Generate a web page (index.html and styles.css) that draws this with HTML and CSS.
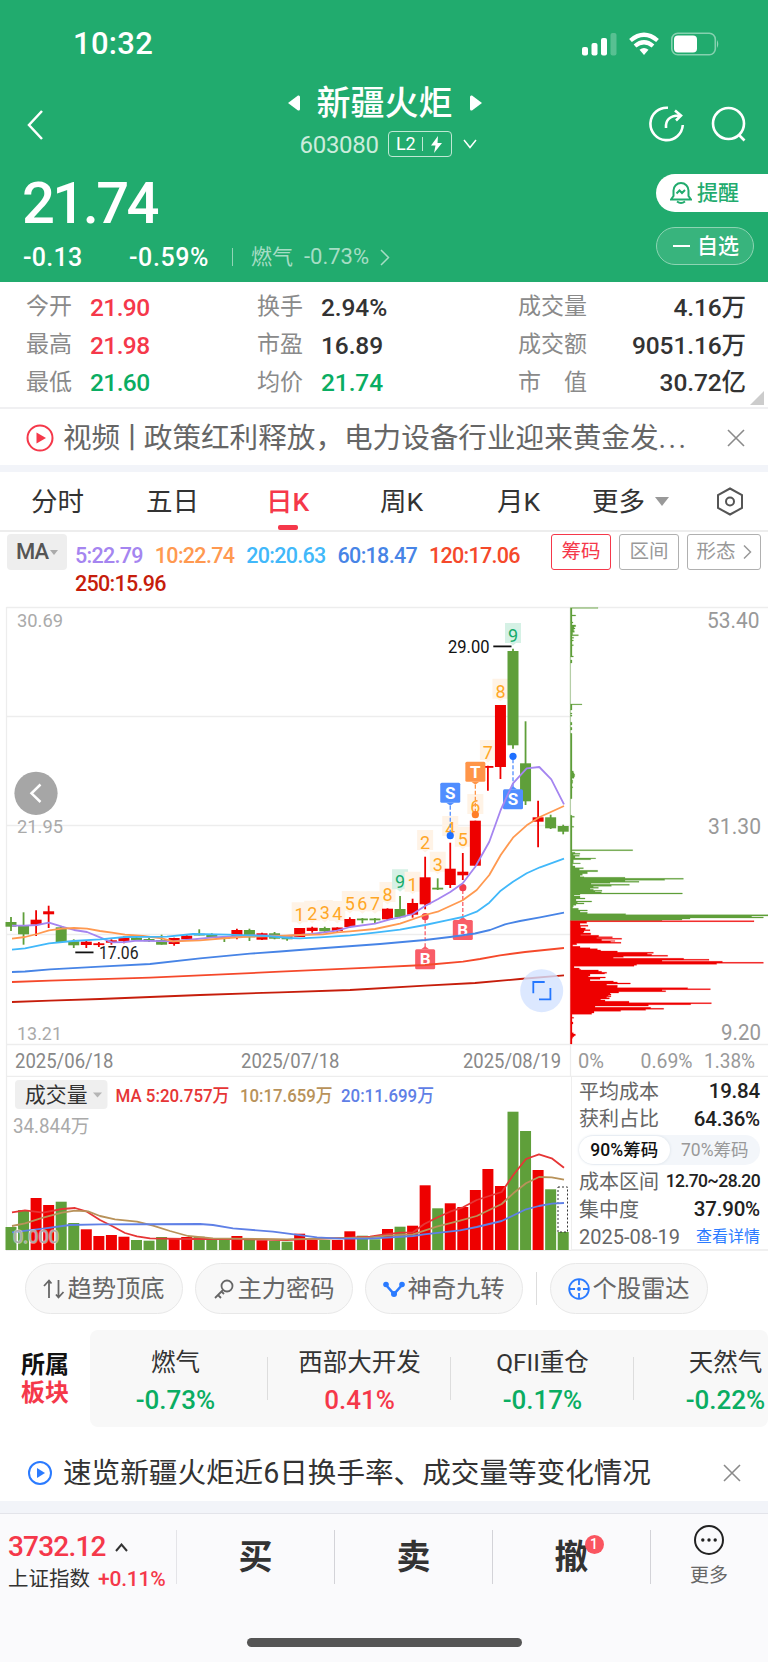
FILE: index.html
```html
<!DOCTYPE html>
<html lang="zh-CN">
<head>
<meta charset="UTF-8">
<title>新疆火炬 603080</title>
<link rel="stylesheet" href="styles.css">
</head>
<body>
<header class="header">
  <div class="status">
    <span class="time">10:32</span>
    <svg width="138" height="24" viewBox="0 0 138 24" fill="#fff">
      <rect x="1" y="15" width="6" height="8.5" rx="2"/>
      <rect x="10.500" y="11" width="6" height="12.500" rx="2"/>
      <rect x="20" y="6" width="6" height="17.500" rx="2"/>
      <rect x="29.500" y="1" width="6" height="22.500" rx="2" opacity=".25"/>
      <g fill="none" stroke="#fff" stroke-width="4.200">
        <path d="M49.500 8.500 Q63 -3 76.500 8.500"/>
        <path d="M54 14 Q63 6.500 72 14"/>
      </g>
      <path d="M58.500 17.800 Q63 14 67.500 17.800 L63 23 Z"/>
      <rect x="90.800" y="1.200" width="43.500" height="21.600" rx="6" fill="none" stroke="#fff" stroke-width="1.600" opacity=".45"/>
      <rect x="93" y="3.500" width="23" height="17" rx="4"/>
      <path d="M136 8 Q138.500 12 136 16 Z" opacity=".5"/>
    </svg>
  </div>
  <div class="titlebar">
    <svg class="back" width="18" height="32" viewBox="0 0 18 32"><path d="M16 2 L3 16 L16 30"/></svg>
    <div class="title">
      <div class="name">
        <svg width="12" height="16" viewBox="0 0 12 16"><path d="M0 8 L10 .5 Q12 0 12 2 V14 Q12 16 10 15.500 Z" fill="#fff"/></svg>
        <span>新疆火炬</span>
        <svg width="12" height="16" viewBox="0 0 12 16"><path d="M12 8 L2 .5 Q0 0 0 2 V14 Q0 16 2 15.500 Z" fill="#fff"/></svg>
      </div>
      <div class="code">
        <span class="num">603080</span>
        <span class="level num">L2<i></i>
          <svg width="13" height="17" viewBox="0 0 13 17"><path d="M8 0 L1 9.500 H5.500 L4 17 L12 7 H7.500 Z" fill="#fff"/></svg>
        </span>
        <svg width="14" height="10" viewBox="0 0 14 10"><path d="M1 1 L7 8.500 L13 1"/></svg>
      </div>
    </div>
    <div class="tools">
      <svg width="36" height="36" viewBox="0 0 36 36"><path d="M19 1.800 A16.200 16.200 0 1 0 33.800 19"/><path d="M17 22 Q16 10 30 9.500 M26 4.500 L32 9.500 L27 14.500"/></svg>
      <svg width="36" height="36" viewBox="0 0 36 36"><circle cx="17.500" cy="17.500" r="15.500"/><path d="M27.500 28.500 L33.500 34.500"/></svg>
    </div>
  </div>
  <div class="quote">
    <div>
      <div class="price num">21.74</div>
      <div class="change num">
        <span class="diff">-0.13</span><span class="rate">-0.59%</span><i></i>
        <span class="sector-link">燃气</span><span class="sector-rate">-0.73%</span>
        <svg width="10" height="17" viewBox="0 0 10 17"><path d="M1 1 L8.500 8.500 L1 16"/></svg>
      </div>
    </div>
    <div class="actions">
      <div class="remind">
        <svg width="22" height="24" viewBox="0 0 22 24"><path d="M1 18.500 H21 L18.500 15 V9.500 A7.500 7.500 0 0 0 3.500 9.500 V15 Z M7 20.500 Q11 23.500 15 20.500 M6.500 12.500 L9.500 9.500 L12 12 L15 9"/></svg>
        提醒
      </div>
      <div class="fav"><i></i>自选</div>
    </div>
  </div>
</header>

<section class="stats">
  <dl class="col1">
    <dt>今开</dt><dd class="up">21.90</dd>
    <dt>最高</dt><dd class="up">21.98</dd>
    <dt>最低</dt><dd class="down">21.60</dd>
  </dl>
  <dl class="col2">
    <dt>换手</dt><dd>2.94%</dd>
    <dt>市盈</dt><dd>16.89</dd>
    <dt>均价</dt><dd class="down">21.74</dd>
  </dl>
  <dl class="col3">
    <dt>成交量</dt><dd>4.16万</dd>
    <dt>成交额</dt><dd>9051.16万</dd>
    <dt>市　值</dt><dd>30.72亿</dd>
  </dl>
  <i class="corner"></i>
</section>

<div class="notice video">
  <svg width="28" height="28" viewBox="0 0 28 28"><circle cx="14" cy="14" r="12.500" fill="none" stroke="#f5384a" stroke-width="2"/><path d="M10.500 8.500 L20 14 L10.500 19.500 Z" fill="#f5384a"/></svg>
  <span class="msg">视频<b>丨</b>政策红利释放，电力设备行业迎来黄金发<em>...</em></span>
  <svg class="close" width="18" height="18" viewBox="0 0 18 18"><path d="M1 1 L17 17 M17 1 L1 17"/></svg>
</div>
<div class="band"></div>

<nav class="tabs">
  <span class="t1">分时</span><span class="t2">五日</span><span class="t3 active">日K</span>
  <span class="t4">周K</span><span class="t5">月K</span><span class="t6">更多<i></i></span>
  <svg width="28" height="29" viewBox="0 0 28 29"><path d="M14 1.500 L26 8 V21 L14 27.500 L2 21 V8 Z"/><circle cx="14" cy="14.500" r="4"/></svg>
</nav>

<div class="indicator">
  <span class="picker num">MA<i></i></span>
  <div class="legend num">
    <span class="ma5">5:22.79</span><span class="ma10">10:22.74</span><span class="ma20">20:20.63</span><span class="ma60">60:18.47</span><span class="ma120">120:17.06</span><span class="ma250">250:15.96</span>
  </div>
  <div class="modes">
    <span class="on">筹码</span><span>区间</span><span class="wide">形态<svg width="9" height="16" viewBox="0 0 9 16"><path d="M1 1.500 L7.500 8 L1 14.500"/></svg></span>
  </div>
</div>

<svg id="kline" width="768" height="477" viewBox="0 600 768 477"></svg>

<div class="lower">
  <svg id="volume" width="571" height="174" viewBox="0 1077 571 174"></svg>
  <div class="chips">
    <p><span>平均成本</span><b>19.84</b></p>
    <p><span>获利占比</span><b>64.36%</b></p>
    <div class="toggle"><span class="on">90%筹码</span><span>70%筹码</span></div>
    <p><span>成本区间</span><b class="small">12.70~28.20</b></p>
    <p><span>集中度</span><b>37.90%</b></p>
    <p><span class="date">2025-08-19</span><a>查看详情</a></p>
  </div>
</div>

<div class="pills">
  <span class="pill"><svg width="22" height="22" viewBox="0 0 22 22" stroke="#666"><path d="M6 20 V3 M1 8 L6 2.500 L8.500 5.500 M15.500 2 V19 M20.500 14 L15.500 19.500 L13 16.500"/></svg>趋势顶底</span>
  <span class="pill"><svg width="22" height="22" viewBox="0 0 22 22" stroke="#666"><circle cx="14" cy="8" r="5.500"/><path d="M10 12 L2 20 M5 17 L8 20 M8.500 13.500 L11 16"/></svg>主力密码</span>
  <span class="pill"><svg width="22" height="22" viewBox="0 0 22 22" stroke="#2b7bff"><path d="M3 7 L11 16 L19 7" stroke-width="2.500"/><g fill="#2b7bff" stroke="none"><circle cx="3" cy="6.500" r="2.800"/><circle cx="19" cy="6.500" r="2.800"/><circle cx="11" cy="16" r="3"/></g></svg>神奇九转</span>
  <i></i>
  <span class="pill"><svg width="22" height="22" viewBox="0 0 22 22" stroke="#2b7bff"><circle cx="11" cy="11" r="9.800"/><path d="M11 1 V7 M11 15 V21 M1 11 H7 M15 11 H21"/><circle cx="11" cy="11" r="1" fill="#2b7bff"/></svg>个股雷达</span>
</div>

<div class="sectors">
  <div class="label">所属<br><em>板块</em></div>
  <div class="cells">
    <div><span>燃气</span><b class="down">-0.73%</b></div>
    <div><span>西部大开发</span><b class="up">0.41%</b></div>
    <div><span>QFII重仓</span><b class="down">-0.17%</b></div>
    <div><span>天然气</span><b class="down">-0.22%</b></div>
  </div>
</div>

<div class="notice tip">
  <svg width="26" height="26" viewBox="0 0 26 26"><circle cx="13" cy="13" r="11" fill="none" stroke="#2b7bff" stroke-width="2"/><path d="M10 8 L18 13 L10 18 Z" fill="#2b7bff"/></svg>
  <span class="msg">速览新疆火炬近6日换手率、成交量等变化情况</span>
  <svg class="close" width="18" height="18" viewBox="0 0 18 18"><path d="M1 1 L17 17 M17 1 L1 17"/></svg>
</div>

<footer class="footer">
  <div class="bar">
    <div class="index">
      <div class="point num">3732.12<svg width="13" height="9" viewBox="0 0 13 9"><path d="M1 8 L6.500 1.500 L12 8"/></svg></div>
      <div class="sub">上证指数<span class="num">+0.11%</span></div>
    </div>
    <div class="trade">买</div>
    <div class="trade">卖</div>
    <div class="trade"><span>撤<sup>1</sup></span></div>
    <div class="more">
      <svg width="32" height="32" viewBox="0 0 32 32"><circle cx="16" cy="16" r="14" fill="none" stroke="#222" stroke-width="2"/><g fill="#222"><circle cx="9.800" cy="16" r="1.700"/><circle cx="16" cy="16" r="1.700"/><circle cx="22.200" cy="16" r="1.700"/></g></svg>
      更多
    </div>
  </div>
  <div class="home"></div>
</footer>
<script src="chart.js"></script>
</body>
</html>
```
FILE: styles.css
```css
* {
  box-sizing: border-box;
}
body {
  margin: 0;
  width: 768px;
  background: #fff;
  color: #333;
  font-family: Roboto, "Noto Sans CJK SC", sans-serif;
  line-height: 1;
}
svg {
  display: block;
  flex: none;
}
i, em {
  font-style: normal;
}
.up { color: #f5384a; }
.down { color: #0aad62; }

/* header */
.header {
  height: 282px;
  background: #21ab6e;
  color: #fff;
  overflow: hidden;
}
.header path, .tools circle {
  stroke: #fff;
}
.status path, .name path, .level path {
  stroke: none;
}
.status g path {
  stroke: #fff;
}
.status {
  height: 87px;
  padding: 0 49px 0 73px;
  display: flex;
  align-items: center;
  justify-content: space-between;
}
.time {
  font-size: 31px;
  font-weight: 500;
  letter-spacing: .3px;
}
.titlebar {
  height: 76px;
  display: flex;
  justify-content: space-between;
  padding: 0 21px 0 26px;
}
.back {
  margin-top: 22px;
  width: 18px;
  fill: none;
  stroke-width: 2.5;
}
.title {
  width: 200px;
  margin-left: 76px;
}
.name {
  height: 32px;
  display: flex;
  align-items: center;
  justify-content: center;
  gap: 17px;
  font-size: 34px;
  font-weight: 500;
}
.code {
  margin-top: 12px;
  height: 26px;
  padding-left: 15px;
  display: flex;
  align-items: center;
  gap: 9px;
  font-size: 24px;
  color: #cbecdc;
  letter-spacing: -.3px;
}
.code > .num:first-child {
  padding-top: 2px;
}
.code > svg {
  fill: none;
  stroke-width: 1.5;
  margin-left: 2px;
}
.level {
  height: 26px;
  width: 64px;
  border: 1.5px solid #bfe8d4;
  border-radius: 4px;
  display: flex;
  align-items: center;
  justify-content: center;
  gap: 7px;
  font-size: 18px;
  color: #fff;
}
.level i {
  width: 1px;
  height: 14px;
  background: #bfe8d4;
}
.tools {
  display: flex;
  gap: 26px;
  padding-top: 19px;
  fill: none;
  stroke-width: 2.6;
}
.quote {
  display: flex;
  justify-content: space-between;
}
.price {
  margin: 11px 0 0 22px;
  height: 58px;
  font-size: 58px;
  font-weight: 500;
  letter-spacing: -2.6px;
}
.change {
  height: 50px;
  padding-left: 23px;
  display: flex;
  align-items: center;
  font-size: 25px;
  font-weight: 500;
}
.diff { width: 106px; letter-spacing: .3px; }
.rate { width: 103px; letter-spacing: .6px; }
.change i {
  width: 1px;
  height: 18px;
  background: #90d5b6;
  margin-right: 18px;
}
.sector-link, .sector-rate {
  font-size: 21px;
  font-weight: 400;
  color: #a6ddc5;
  margin-right: 11px;
}
.sector-rate {
  font-size: 22px;
  letter-spacing: 0;
}
.change svg {
  fill: none;
  stroke-width: 1.5;
  opacity: .6;
}
.actions {
  width: 112px;
  padding-top: 11px;
  font-size: 21px;
  font-weight: 500;
}
.remind, .fav {
  height: 38px;
  display: flex;
  align-items: center;
  border-radius: 19px 0 0 19px;
  padding-left: 14px;
  gap: 5px;
  background: #fff;
  color: #21ab6e;
}
.remind path {
  fill: none;
  stroke: #21ab6e;
  stroke-width: 2;
}
.fav {
  margin-top: 15px;
  width: 98px;
  gap: 7px;
  padding-left: 16px;
  color: #fff;
  background: #38b47d;
  border: 1px solid #8dd4b3;
  border-radius: 19px;
}
.fav i {
  width: 17px;
  height: 2px;
  background: #fff;
}

/* quote figures */
.stats {
  position: relative;
  height: 127px;
  padding: 6px 22px 0 26px;
  display: flex;
  border-bottom: 2px solid #f0f0f2;
}
.stats dl {
  margin: 0;
  display: grid;
  grid-template-columns: 64px auto;
  grid-auto-rows: 37.700px;
  align-items: center;
  justify-content: start;
}
.stats .col1 {
  width: 231px;
}
.stats .col2 {
  width: 261px;
}
.stats .col3 {
  flex: 1;
  grid-template-columns: 70px 1fr;
}
.stats dt {
  font-size: 23px;
  color: #8a8a8a;
}
.stats dd {
  margin: 3px 0 0;
  font-size: 24.500px;
  font-weight: 500;
  letter-spacing: -.1px;
}
.stats .col1 dd {
  letter-spacing: -.6px;
}
.col3 dd {
  text-align: right;
}
.corner {
  position: absolute;
  right: 4px;
  bottom: 2px;
  border-left: 14px solid transparent;
  border-bottom: 14px solid #ccc;
}

.notice {
  height: 56px;
  padding: 2px 23px 0 26px;
  display: flex;
  align-items: center;
  font-size: 28.600px;
  white-space: nowrap;
}
.notice .msg {
  flex: 1;
  margin-left: 9px;
}
.notice b {
  font-weight: 400;
  margin: 0 -2.500px;
}
.notice em {
  letter-spacing: 2.500px;
}
.close {
  stroke: #8a8a8a;
  stroke-width: 1.6;
}
.video { color: #666; }
.tip {
  margin-top: 16px;
  padding: 2px 27px 0;
  height: 58px;
}
.tip .msg { margin-left: 10px; }
.band {
  height: 7px;
  background: #f2f4f9;
}

.tabs {
  height: 60px;
  border-bottom: 2px solid #ededed;
  display: flex;
  align-items: center;
  font-size: 26.500px;
  padding-left: 31px;
}
.tabs span {
  height: 58px;
  line-height: 60px;
}
.t1 { width: 115px; }
.t2 { width: 120px; }
.t3 { width: 114px; }
.t4 { width: 117px; }
.t5 { width: 95px; }
.t6 {
  width: 124px;
}
.t6 i {
  display: inline-block;
  margin-left: 10px;
  vertical-align: 5px;
  border: 7px solid transparent;
  border-top: 9px solid #999;
  border-bottom: 0;
}
.tabs svg {
  fill: none;
  stroke: #555;
  stroke-width: 2;
}
.active {
  color: #f5384a;
  font-weight: 500;
}
.active::after {
  content: "";
  display: block;
  width: 20px;
  height: 5px;
  margin: -7px 0 0 12px;
  border-radius: 2px;
  background: #f5384a;
}

.indicator {
  height: 68px;
  padding: 2px 7px 0;
  display: flex;
}
.picker {
  flex: none;
  width: 60px;
  height: 36px;
  border-radius: 4px;
  background: #eee;
  display: flex;
  align-items: center;
  justify-content: center;
  font-size: 22px;
  color: #555;
  font-weight: 500;
  letter-spacing: -1px;
}
.picker i {
  margin-left: 2px;
  border: 4.500px solid transparent;
  border-top: 5.500px solid #aaa;
  border-bottom: 0;
}
.legend {
  flex: none;
  width: 484px;
  padding: 8px 0 0 8px;
  display: flex;
  flex-wrap: wrap;
  align-content: flex-start;
  column-gap: 12px;
  font-size: 21.500px;
  font-weight: 500;
  line-height: 28px;
  letter-spacing: -.7px;
}
.ma5 { color: #a585f0; }
.ma10 { color: #ff9950; }
.ma20 { color: #41b8fa; }
.ma60 { color: #4784e6; }
.ma120 { color: #f5492b; }
.ma250 { color: #c61d0b; }
.modes {
  flex: none;
  display: flex;
  gap: 8px;
  font-size: 19.500px;
  color: #999;
}
.modes span {
  width: 60px;
  height: 36px;
  border: 1px solid #b0b0b0;
  border-radius: 3px;
  display: flex;
  align-items: center;
  justify-content: center;
  gap: 7px;
}
.modes .wide { width: 74px; }
.modes .on {
  color: #f5384a;
  border-color: #f5384a;
}
.modes svg {
  fill: none;
  stroke: #999;
  stroke-width: 1.5;
}

/* charts */
#kline, #volume {
  font-family: Roboto, "Noto Sans CJK SC", sans-serif;
}
.lower {
  display: flex;
  height: 174px;
}
.chips {
  width: 197px;
  border-left: 1px solid #eee;
  border-bottom: 2px solid #f0f0f0;
  padding: 1px 8px 0 7px;
}
.chips p {
  margin: 0;
  height: 27.300px;
  display: flex;
  align-items: center;
  justify-content: space-between;
  font-size: 20px;
  color: #666;
}
.chips b {
  font-weight: 500;
  font-size: 20.500px;
  letter-spacing: -.2px;
  color: #222;
}
.chips .small {
  font-size: 17.500px;
  letter-spacing: -.6px;
}
.chips .date {
  font-size: 20px;
}
.chips a {
  font-size: 16px;
  color: #2b7bff;
}
.toggle {
  height: 30px;
  margin: 2px 0 4px;
  border-radius: 15px;
  background: #f3f6fa;
  display: flex;
  align-items: center;
  font-size: 17.500px;
  color: #999;
}
.toggle span {
  flex: 1;
  height: 28px;
  line-height: 28px;
  text-align: center;
  letter-spacing: 0;
}
.toggle .on {
  border-radius: 14px;
  background: #fff;
  box-shadow: 0 0 3px #d5dde5;
  color: #111;
  font-weight: 500;
}

.pills {
  display: flex;
  align-items: center;
  gap: 12px;
  padding: 12px 0 0 25px;
}
.pill {
  width: 158px;
  height: 51px;
  padding-top: 1px;
  border: 1px solid #e8e8e8;
  border-radius: 26px;
  background: #f8f8f8;
  display: flex;
  align-items: center;
  justify-content: center;
  gap: 2px;
  font-size: 24.300px;
  color: #666;
}
.pill svg {
  fill: none;
  stroke-width: 1.8;
}
.pills i {
  width: 1px;
  height: 33px;
  margin: 0 1px;
  background: #ddd;
}

.sectors {
  margin-top: 16px;
  height: 97px;
  display: flex;
  align-items: center;
  overflow: hidden;
}
.label {
  width: 90px;
  flex: none;
  padding-left: 21px;
  font-size: 24px;
  font-weight: 700;
  line-height: 28px;
  color: #111;
}
.label em { color: #f5384a; }
.cells {
  flex: none;
  width: 678px;
  height: 97px;
  border-radius: 8px;
  background: #f8f8f8;
  display: flex;
  overflow: hidden;
}
.cells div {
  flex: none;
  width: 183px;
  padding-top: 21px;
  text-align: center;
  font-size: 24.500px;
  white-space: nowrap;
  background: linear-gradient(#ddd, #ddd) right 27px / 1px 43px no-repeat;
}
.cells div:first-child {
  width: 178px;
  padding-right: 7px;
}
.cells span, .cells b {
  display: block;
}
.cells b {
  margin-top: 11px;
  font-size: 26px;
  font-weight: 500;
}

.footer {
  height: 161px;
  background: #fafafc;
  border-top: 12px solid #f2f4f9;
}
.bar {
  height: 125px;
  border-top: 1px solid #e3e4ea;
  padding-top: 16px;
  display: flex;
}
.index {
  width: 177px;
  padding: 3px 0 0 8px;
  background: linear-gradient(#e4e4e8, #e4e4e8) right 0 / 1px 54px no-repeat;
}
.point {
  display: flex;
  align-items: center;
  gap: 9px;
  font-size: 28px;
  font-weight: 500;
  letter-spacing: -.8px;
  color: #f5384a;
}
.point svg {
  fill: none;
  stroke: #333;
  stroke-width: 2;
}
.sub {
  margin-top: 8px;
  font-size: 20.500px;
  white-space: nowrap;
}
.sub .num {
  margin-left: 8px;
  font-size: 21px;
  letter-spacing: -.2px;
  font-weight: 500;
  color: #f5384a;
}
.trade {
  width: 158px;
  height: 54px;
  border-right: 1px solid #d3d3d8;
  display: flex;
  align-items: center;
  justify-content: center;
  font-size: 34px;
  font-weight: 700;
}
.trade span {
  position: relative;
}
.trade sup {
  position: absolute;
  top: -5px;
  left: 30px;
  width: 19px;
  height: 19px;
  border-radius: 50%;
  background: #fa5560;
  color: #fff;
  font-size: 14px;
  font-weight: 500;
  line-height: 19px;
  text-align: center;
}
.more {
  width: 116px;
  display: flex;
  flex-direction: column;
  align-items: center;
  gap: 10px;
  margin-top: -6px;
  font-size: 19px;
  color: #666;
}
.home {
  width: 275px;
  height: 9px;
  margin: 0 auto;
  border-radius: 5px;
  background: #555;
}
```
FILE: chart.js
```js
const RED = '#ee0000', GREEN = '#5f9f3a';
const STEP = 12.55;
const cx = i => 11 + STEP * i;

// color, high, body top, body bottom, low
const candles = [
  ['g',917,922,926.7,931],['g',912.3,925.7,934.3,944.7],['r',910.3,919.7,924.7,936],['r',905.7,911.3,914.3,928],
  ['g',926.7,927.3,942,942],['g',939.3,941.3,945.3,948],['r',940.3,941.7,945,948],['r',942,943.3,945,947],
  ['r',939.3,940.3,942.7,944.7],['r',936.3,937,941,943.3],['g',937,937.7,940.3,941],['g',937.7,939,941.3,942],
  ['g',934.7,940,944.7,944.7],['r',937.7,938,944,945.7],['r',934.7,935.7,939.3,939.3],['g',929.3,933.7,934.7,935.3],
  ['g',933.3,934,937.3,938],['g',936,937,938.7,942],['r',928.7,930,937.3,939.3],['g',928.7,930,937.3,941],
  ['r',932.7,933.3,939.7,940],['g',932,933.3,938.7,939.3],['g',935,936,939.3,940.7],['r',928,928,937,937],
  ['r',926.7,927.7,931,932.7],['g',926.7,928,931.3,932.7],['r',927.3,927.5,931,932.7],['r',917.3,919,927,927.7],
  ['g',918,918.5,920,923.3],['g',918,918.5,920,923],['r',908.3,908.7,919.3,920],['g',896,909,917.3,918.3],
  ['r',898.7,903,914.7,917.7],['r',856.7,877.3,904.3,909.3],['g',878.3,887.7,889.3,890],['r',842.7,868.7,885,888],
  ['r',853,871.7,875.3,880],['r',820.7,820.7,865.7,865.7],['r',765.7,766,767.5,790.7],['r',705,705,767,779],
  ['g',648.7,651,745.3,748.7],['g',721.3,763.3,801.3,805],['r',800.7,817.3,821.7,847.3],['g',814.7,817.3,828.3,829],
  ['g',824.7,826,831.7,834.3]
];

const averages = {
  '#c61d0b': '12,1002 50,1000.7 100,999 200,995 280,992.3 350,990 425,985.7 475,983 520,979 564,975.3',
  '#f5492b': '12,982 50,980.7 150,977.7 200,975.3 280,971.7 370,967.7 425,965 463,961.7 480,959 500,955.3 525,952 564,948',
  '#4784e6': '12,972 25,971.5 50,969.3 100,966.7 150,964 200,958.3 250,953.7 280,951.5 325,948 380,944 425,940 450,937 475,933.5 490,930 505,924.3 520,921 540,917.3 564,912.7',
  '#a585f0': '12,925.7 25,925.7 37,925 49,922.7 62,926.7 74,930 87,932 100,937.3 112,942.3 125,942 137,940.7 173,941.3 187,940 213,937.3 253,935.3 287,936 300,935 312,934 337,930.7 350,927 375,923.7 390,919.3 400,917.3 412.7,914 425,906 437.7,899.3 450.3,892 462.7,883.3 475.3,866.7 489.3,841.7 500.7,810 513,783.3 526.7,768.3 539.3,767 551.3,779.3 564,804.3',
  '#ff9950': '12,938.7 25,937 37,934 49,930.3 62,928.7 74,928 87,928.7 100,931 112,932.7 125,934.7 143,936 162,938.3 173,941.3 200,940.3 227,938 250,936.7 280,936 300,935 323,934.3 337,932.3 350,931.3 375,929 400,923.7 425,915 437.7,911.7 462.7,900.3 476.7,890 489.3,875 500.7,855 513,837.7 526.7,825.3 539.3,817.3 564,806',
  '#41b8fa': '12,949.7 25,948.3 49,943.3 73,941 100,939.3 125,937 167,936.7 193,934 227,934.7 267,936 290,938 300,938.3 320,937.3 350,935.3 375,932.7 400,929.7 425,925 446.7,920.3 462.7,917 476.7,911.7 489.3,902.7 500.7,890.7 513,881.7 526.7,873.3 540,867.3 564,858.7'
};

// candle index, digit, baseline
const counts = [
  [23,1,921.3],[24,2,919.7],[25,3,919],[26,4,920],[27,5,910],[28,6,910.3],[29,7,910.3],[30,8,901],[31,9,888.3],[32,1,890.7],
  [33,2,849],[34,3,870.7],[35,4,835],[36,5,845.7],[37,6,813],[38,7,759],[39,8,697.7],[40,9,642]
];

// candle index, letter, box top, dot y, color, dot color
const marks = [
  [35,'S',782.7,835.7,'#508eff','#1f70ff'],
  [40,'S',789.3,756.3,'#508eff','#1f70ff'],
  [37,'T',761.7,814.7,'#ff9548','#ff7f27'],
  [33,'B',949.3,916.7,'#f95d68','#f23c4c'],
  [36,'B',920,887.7,'#f95d68','#f23c4c']
];

// cost distribution: row, bar end (3 units per pixel)
const profit = [[23,114],[25,36],[45,47],[48,36],[66,39],[69,36],[75,47],[80,42],[84,45],[87,41],[92,43],[97,38],[104,55],[107,36],[112,41],[115,36],[120,40],[123,36],[134,40],[137,36],[168,40],[171,0],[180,36],[189,0],[312,66],[314,36],[330,0],[339,36],[342,0],[345,36],[349,0],[367,36],[375,0],[382,36],[390,0],[400,36],[513,40],[518,42],[522,44],[530,42],[535,36],[540,38],[550,36],[560,38],[564,36],[596,0],[646,36],[649,43],[652,36],[679,41],[682,36],[749,218],[752,36],[757,45],[760,60],[763,40],[766,58],[769,45],[772,45],[774,107],[776,92],[779,40],[789,61],[791,38],[798,45],[803,70],[806,58],[811,113],[815,82],[818,82],[821,67],[826,60],[830,72],[832,195],[835,370],[838,314],[841,195],[844,237],[847,150],[850,93],[853,208],[856,154],[859,100],[862,115],[865,90],[868,100],[871,126],[874,105],[876,124],[879,367],[882,60],[885,42],[888,60],[894,75],[897,48],[903,95],[906,52],[909,72],[912,48],[916,40],[920,38],[925,55],[930,82],[933,60],[937,82],[941,197],[944,624],[948,575],[951,610],[954,390],[957,366],[960,306],[962,0]];
const loss = [[962,582],[965,80],[967,80],[970,60],[976,84],[979,62],[984,76],[989,90],[992,72],[996,70],[999,92],[1004,62],[1006,116],[1010,157],[1013,110],[1015,185],[1018,125],[1022,165],[1024,152],[1027,183],[1030,50],[1034,38],[1039,60],[1043,90],[1046,112],[1050,122],[1053,172],[1057,280],[1060,262],[1063,275],[1066,323],[1069,190],[1072,160],[1075,371],[1078,447],[1081,306],[1084,487],[1087,610],[1090,470],[1093,230],[1096,222],[1099,42],[1104,58],[1108,62],[1110,115],[1114,125],[1117,140],[1120,134],[1122,90],[1128,85],[1131,136],[1134,120],[1138,90],[1143,160],[1146,172],[1149,211],[1152,140],[1156,172],[1163,383],[1166,451],[1169,306],[1172,317],[1175,176],[1179,150],[1182,153],[1185,145],[1187,153],[1190,140],[1193,148],[1197,122],[1200,135],[1204,207],[1208,454],[1211,392],[1214,265],[1218,105],[1222,272],[1225,311],[1228,257],[1231,182],[1234,102],[1239,95],[1243,36],[1252,41],[1255,36],[1266,39],[1272,36],[1298,40],[1302,46],[1307,42],[1310,38],[1315,36],[1332,0]];

function text(x, y, s, width, size, fill, extra = '') {
  return `<text x="${x}" y="${y}" textLength="${width}" lengthAdjust="spacingAndGlyphs" font-size="${size}" fill="${fill}" ${extra}>${s}</text>`;
}
function line(x1, y1, x2, y2, color = '#ededed', w = 1.3, extra = '') {
  return `<path d="M${x1} ${y1} L${x2} ${y2}" stroke="${color}" stroke-width="${w}" fill="none" ${extra}/>`;
}
function poly(points, color) {
  return `<polyline points="${points}" fill="none" stroke="${color}" stroke-width="1.8" stroke-linejoin="round"/>`;
}
// one stepped outline, so that neighbouring rows leave no seams
function rows(data, color) {
  let d = `M31 ${data[0][0]}`;
  for (let i = 0; i < data.length - 1; i++) {
    d += ` H${data[i][1] || 31} V${data[i + 1][0]}`;
  }
  return `<path d="${d} H31 Z" fill="${color}" stroke="${color}" stroke-width=".8" transform="translate(560 600) scale(.33333)"/>`;
}

function drawKline() {
  let s = '';
  s += line(6.5, 607.5, 768, 607.5) + line(6.5, 716.5, 570, 716.5) + line(6.5, 825.5, 570, 825.5);
  s += line(6.5, 934.5, 570, 934.5) + line(6.5, 1044.5, 768, 1044.5) + line(6.5, 1076.300, 768, 1076.300);
  s += line(6.5, 607, 6.5, 1077) + line(570.5, 607, 570.5, 1077);
  s += text(17, 627, '30.69', 46, 19, '#aaa') + text(17, 833, '21.95', 46, 19, '#aaa') + text(17, 1039.5, '13.21', 45, 19, '#aaa');

  for (const [i, n, y] of counts) {
    const x = cx(i), nine = n === 9;
    s += `<path d="M${x - 8} ${y - 19} h16 v20 h-5 l-3 2.500 l-3 -2.500 h-5 z" fill="${nine ? '#d5f1e5' : '#fff3e6'}"/>`;
    s += `<text x="${x}" y="${y}" font-size="18" text-anchor="middle" fill="${nine ? '#16ab6a' : '#ffa726'}">${n}</text>`;
  }
  candles.forEach(([c, hi, top, bot, lo], i) => {
    const color = c === 'r' ? RED : GREEN;
    s += line(cx(i), hi, cx(i), lo, color, 1.8);
    s += `<rect x="${cx(i) - 5.5}" y="${top}" width="11" height="${Math.max(bot - top, 1.8)}" fill="${color}"/>`;
  });
  for (const [i, letter, top, dot, color, dotColor] of marks) {
    const x = cx(i), above = top < dot;
    s += line(x, above ? top + 23 : top - 2, x, dot, color, 1.3, 'stroke-dasharray="4 2"');
    s += `<rect x="${x - 10}" y="${top}" width="20" height="20" rx="1.500" fill="${color}"/>`;
    s += above
      ? `<path d="M${x - 4} ${top + 20} h8 l-4 3 z" fill="${color}"/>`
      : `<path d="M${x - 4} ${top} h8 l-4 -3 z" fill="${color}"/>`;
    s += `<text x="${x}" y="${top + 16}" font-size="17" font-weight="700" text-anchor="middle" fill="#fff">${letter}</text>`;
    s += `<circle cx="${x}" cy="${dot}" r="3.600" fill="${dotColor}"/>`;
  }
  for (const color in averages) s += poly(averages[color], color);

  s += text(448, 653.3, '29.00', 41.5, 18.5, '#111') + line(493.3, 646.4, 511.5, 646.4, '#111', 1.8);
  s += text(99, 959.3, '17.06', 39.5, 18.5, '#222') + line(75.3, 952.4, 93.5, 952.4, '#111', 1.8);

  // previous / fullscreen buttons
  s += '<circle cx="36" cy="793.300" r="21.600" fill="#a6a6a6"/><path d="M40.500 784.500 L31.500 793.300 L40.500 802" fill="none" stroke="#fff" stroke-width="2.500"/>';
  s += '<circle cx="541.700" cy="990.700" r="21.500" fill="#d3e2ff" opacity=".8"/><path d="M544.700 982 H533.300 V993.300 M550.400 988 V999.300 H539" fill="none" stroke="#2577ff" stroke-width="1.800"/>';

  s += rows(profit, GREEN) + rows(loss, RED);
  s += text(707, 628, '53.40', 52.500, 21.500, '#999') + text(708, 834, '31.30', 53, 21.500, '#999') + text(721, 1040, '9.20', 40, 21.500, '#999');
  s += text(15, 1068, '2025/06/18', 98.500, 20, '#888') + text(241, 1068, '2025/07/18', 98.500, 20, '#888') + text(463, 1068, '2025/08/19', 98, 20, '#888');
  s += text(578, 1068, '0%', 26, 19.500, '#999') + text(640.5, 1068, '0.69%', 52, 19.500, '#999') + text(704, 1068, '1.38%', 51, 19.500, '#999');
  document.getElementById('kline').innerHTML = s;
}

// color, bar top
const volumes = [
  ['g',1227],['g',1210],['r',1198],['r',1205],['g',1201.7],['g',1223],['r',1229.3],['r',1236],['r',1235],['r',1236.7],
  ['g',1240],['g',1240.7],['g',1237],['r',1238.3],['r',1237],['g',1236.7],['g',1240],['g',1239.3],['r',1236],['g',1239],
  ['r',1240.3],['g',1240.7],['g',1241.7],['r',1233.7],['r',1240],['g',1240],['r',1240],['r',1231.3],['g',1235.7],['g',1239.3],
  ['r',1229],['g',1226.7],['r',1225.7],['r',1185.3],['g',1208.3],['r',1203.3],['r',1207],['r',1190],['r',1169],['r',1186],
  ['g',1111.7],['g',1131],['r',1170],['g',1189.3],['g',1232]
];
const volumeAverages = {
  '#e63535': '12,1212.3 25,1210.3 43,1212.7 62,1209 75,1208 87,1211.7 100,1220 112,1226 125,1233 137,1236.3 150,1238.3 187,1239 233,1239 287,1240 300,1239.3 350,1237.7 370,1236.7 383,1234.7 400,1232.7 413,1232.3 424.3,1224 436.7,1217.7 450,1211.7 463,1207.3 476.7,1200 501.7,1192 513.3,1175 526,1159 539,1154.3 551.7,1158.3 564,1167.7',
  '#b8925a': '12,1226 25,1223.3 43,1217.7 62,1212.7 75,1210.7 88,1211.3 100,1216 115,1219.3 137,1221.7 153,1225.7 170,1231 188,1236 213,1238.3 287,1239.3 333,1238.3 370,1237.3 387,1235.7 413,1234.3 436.7,1226.7 460,1220.7 476.7,1216 501.7,1204 513.3,1193.3 526,1183.3 539,1177 551.7,1177.3 564,1179.7',
  '#5f80e6': '12,1232.3 43,1228.7 70,1225 100,1224.3 200,1224 213,1225 233,1228.3 273,1231.7 317,1237.3 340,1238.7 370,1238.7 413,1236 424,1234.3 460,1230.3 476.7,1227 501.7,1221 526,1209.3 539,1206 551.7,1203.7 564,1203'
};

function drawVolume() {
  let s = line(6.5, 1077, 6.5, 1251) + line(6.5, 1250.3, 571, 1250.3);
  s += '<rect x="15" y="1080" width="92.500" height="29" rx="4" fill="#efefef"/><path d="M93 1092.500 h9 l-4.500 5 z" fill="#b5b5b5"/>';
  s += text(25, 1101.5, '成交量', 62.5, 21, '#333');
  s += text(115.5, 1102, 'MA 5:20.757万', 114, 18, '#e63535', 'font-weight="500"');
  s += text(240, 1102, '10:17.659万', 92.5, 18, '#b8925a', 'font-weight="500"');
  s += text(341, 1102, '20:11.699万', 93, 18, '#5f80e6', 'font-weight="500"');
  s += text(13, 1133, '34.844万', 76.5, 19.5, '#aaa');
  volumes.forEach(([c, top], i) => {
    s += `<rect x="${cx(i) - 5.5}" y="${top}" width="11" height="${1250 - top}" fill="${c === 'r' ? RED : GREEN}"/>`;
  });
  s += '<rect x="558" y="1187" width="9.500" height="45" fill="#fff" stroke="#333" stroke-dasharray="2 2"/>';
  for (const color in volumeAverages) s += poly(volumeAverages[color], color);
  s += text(13, 1243, '0.000', 46, 19, '#aaa', 'stroke="#fff" stroke-width="1.500" stroke-opacity=".5" paint-order="stroke"');
  document.getElementById('volume').innerHTML = s;
}

drawKline();
drawVolume();
```
